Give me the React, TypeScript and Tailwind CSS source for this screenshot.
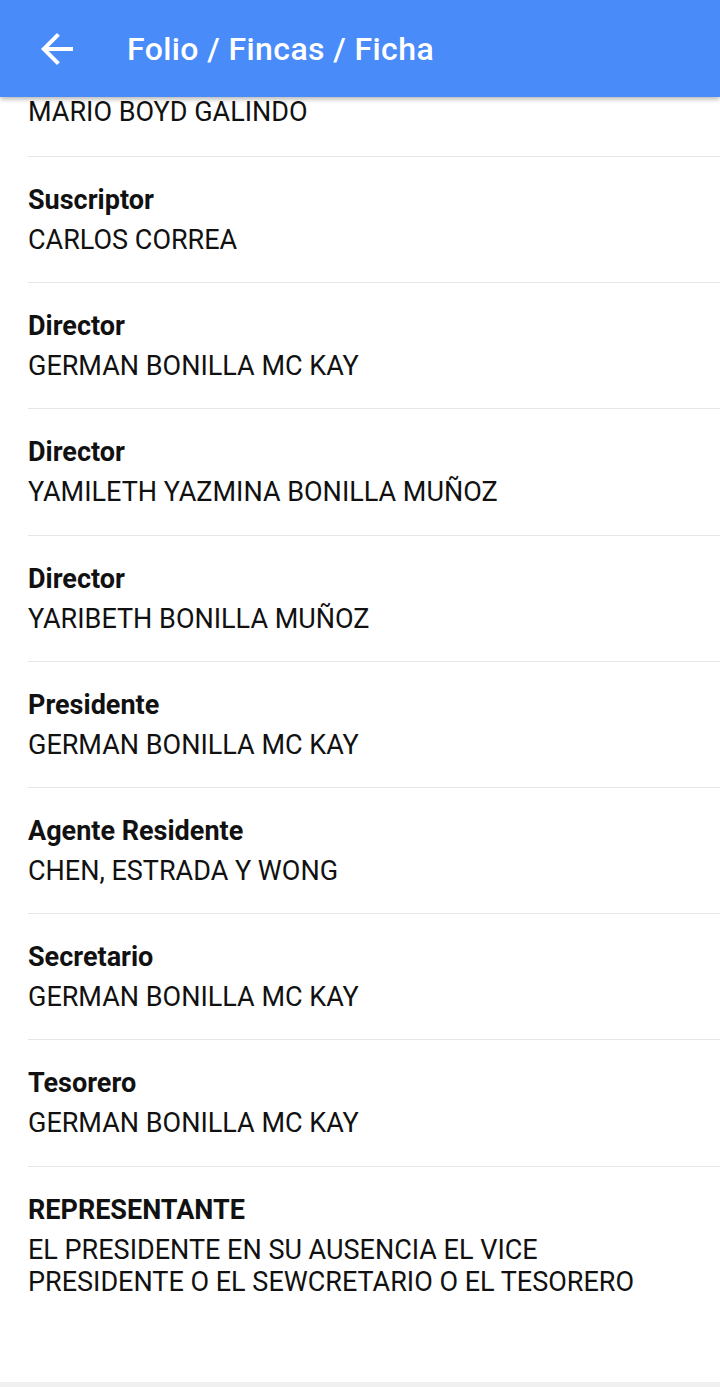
import { ReactNode } from "react";

interface Entry {
  label: string;
  value: ReactNode;
}

const entries: Entry[] = [
  { label: "Suscriptor", value: "CARLOS CORREA" },
  { label: "Director", value: "GERMAN BONILLA MC KAY" },
  { label: "Director", value: "YAMILETH YAZMINA BONILLA MUÑOZ" },
  { label: "Director", value: "YARIBETH BONILLA MUÑOZ" },
  { label: "Presidente", value: "GERMAN BONILLA MC KAY" },
  { label: "Agente Residente", value: "CHEN, ESTRADA Y WONG" },
  { label: "Secretario", value: "GERMAN BONILLA MC KAY" },
  { label: "Tesorero", value: "GERMAN BONILLA MC KAY" },
  {
    label: "REPRESENTANTE",
    value: (
      <>
        EL PRESIDENTE EN SU AUSENCIA EL VICE
        <br />
        PRESIDENTE O EL SEWCRETARIO O EL TESORERO
      </>
    ),
  },
];

function BackArrow() {
  return (
    <svg width="48" height="48" viewBox="0 0 24 24" fill="white">
      <path d="M20 11H7.83l5.59-5.59L12 4l-8 8 8 8 1.41-1.41L7.83 13H20v-2z" />
    </svg>
  );
}

export default function App() {
  return (
    <div className="w-[720px] h-[1387px] bg-white flex flex-col overflow-hidden font-['Roboto',sans-serif] text-[#111]">
      {/* App bar */}
      <header className="relative z-10 h-[97px] shrink-0 bg-[#4a8bfa] flex items-center pl-[33px] shadow-[0_2px_5px_rgba(0,0,0,0.3)]">
        <BackArrow />
        <h1 className="ml-[46px] text-[32px] font-medium text-white tracking-[0.4px]">
          Folio / Fincas / Ficha
        </h1>
      </header>

      {/* Scrolled list */}
      <main className="flex-1 pl-[28px]">
        <div className="-mt-[1px] pb-[28px] text-[27px] leading-[32px]">MARIO BOYD GALINDO</div>
        {entries.map((e, i) => (
          <div key={i} className="border-t border-[#e6e6e6] pt-[27px] pb-[26.2px]">
            <div className="text-[27px] leading-[32px] font-bold">{e.label}</div>
            <div className="mt-[8px] text-[27px] leading-[32px]">{e.value}</div>
          </div>
        ))}
      </main>

      <footer className="h-[5px] shrink-0 bg-[#f0f0f0]" />
    </div>
  );
}
